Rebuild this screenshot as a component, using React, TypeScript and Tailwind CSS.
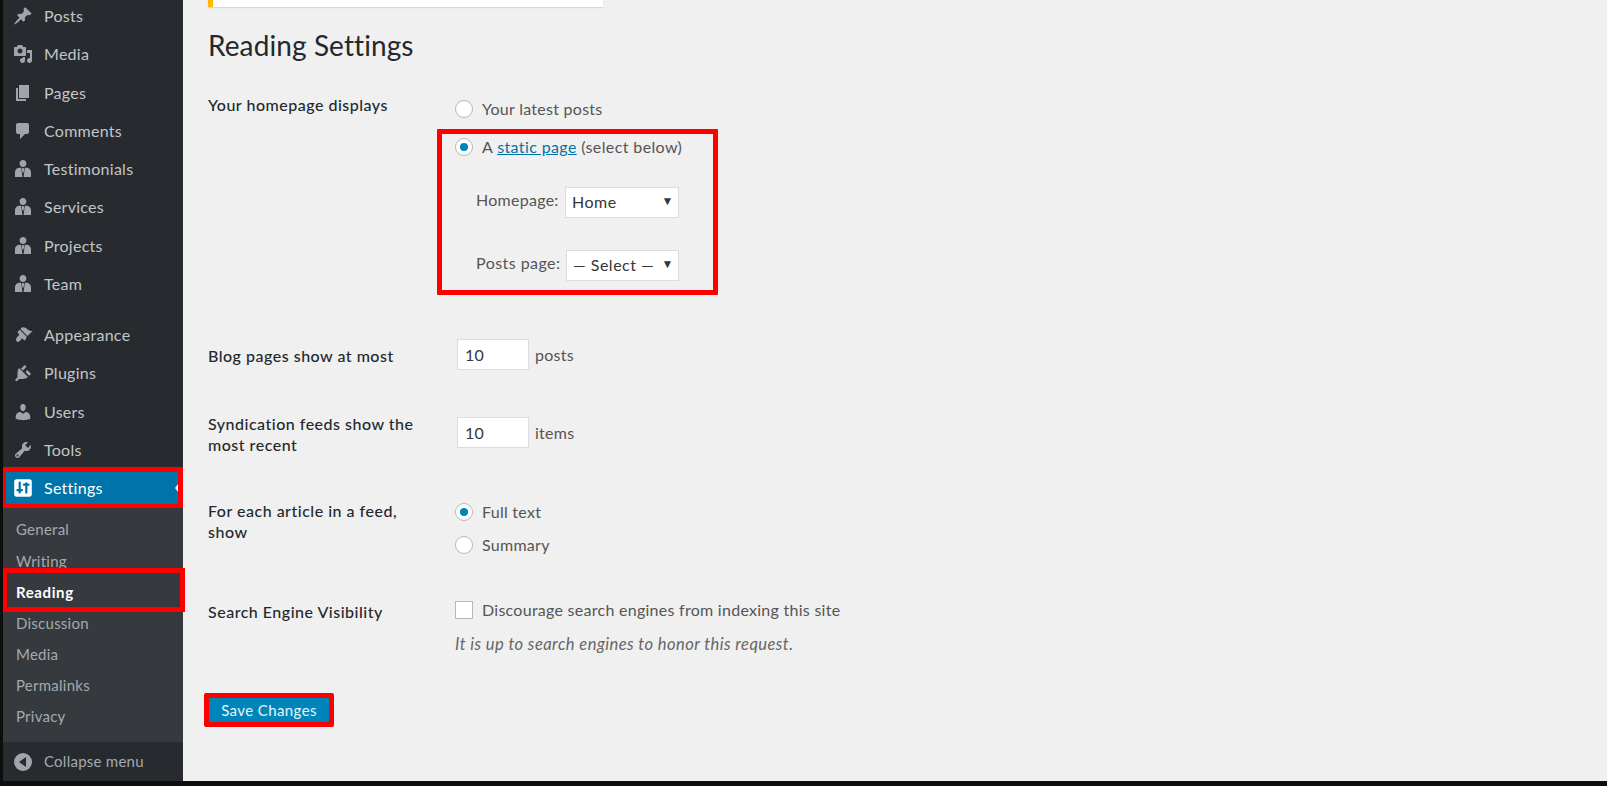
import React from 'react';

const font = 'font-["Lato","Noto_Sans",sans-serif]';

const MenuIcon = ({ name }: { name: string }) => {
  const cls = 'w-[20px] h-[20px] fill-[#a0a5aa]';
  switch (name) {
    case 'pin':
      return <svg viewBox="0 0 20 20" className={cls}><path d="M10.44 3.02l1.82-1.82 6.36 6.35-1.83 1.82c-1.05-.68-2.48-.57-3.41.36l-.75.75c-.92.93-1.04 2.35-.35 3.41l-1.83 1.82-2.41-2.41-2.8 2.79c-.42.42-3.38 2.71-3.8 2.29s1.86-3.39 2.28-3.81l2.79-2.79L4.1 9.36l1.83-1.82c1.05.69 2.48.57 3.4-.36l.75-.75c.93-.92 1.05-2.35.36-3.41z" /></svg>;
    case 'media':
      return <svg viewBox="0 0 20 20" className={cls}><path d="M13 11V4c0-.55-.45-1-1-1h-1.67L9 1H5L3.67 3H2c-.55 0-1 .45-1 1v7c0 .55.45 1 1 1h10c.55 0 1-.45 1-1zM7 4.500c1.380 0 2.500 1.120 2.500 2.500S8.380 9.500 7 9.500 4.500 8.380 4.500 7 5.620 4.500 7 4.500zM14 6h5v10.500c0 1.380-1.120 2.500-2.500 2.500S14 17.880 14 16.500s1.120-2.500 2.500-2.500c.17 0 .34.020.5.050V9h-3V6zm-4 8.050V13h2v3.500c0 1.380-1.120 2.500-2.500 2.500S7 17.880 7 16.500 8.120 14 9.500 14c.17 0 .34.020.5.050z" /></svg>;
    case 'pages':
      return <svg viewBox="0 0 20 20" className={cls}><path d="M6 15V2h10v13H6zm-1 1h8v2H3V5h2v11z" /></svg>;
    case 'comments':
      return <svg viewBox="0 0 20 20" className={cls}><path d="M5 2h9c1.100 0 2 .9 2 2v7c0 1.100-.9 2-2 2h-2l-5 5v-5H5c-1.100 0-2-.9-2-2V4c0-1.100.9-2 2-2z" /></svg>;
    case 'person':
      return <svg viewBox="0 0 20 20" className={cls}><path d="M10 1c1.900 0 3.400 1.500 3.400 3.500S11.900 8 10 8 6.600 6.500 6.600 4.500 8.100 1 10 1zM2 18v-5c0-2.200 2.200-4.300 4.500-4.300h1.700L9.400 18H2zm16 0h-7.400l1.200-9.300h1.700c2.300 0 4.500 2.100 4.500 4.300v5zM9.200 8.900h1.600l.3 2.400-1.100 3.400-1.100-3.400.3-2.400z" /></svg>;
    case 'appearance':
      return <svg viewBox="0 0 20 20" className={cls}><path d="M14.480 11.060L7.410 3.990l1.500-1.500c.5-.56 2.300-.47 3.510.32 1.210.8 1.430 1.280 2.910 2.100 1.180.64 2.450 1.260 4.450.85zm-.71.710L6.700 4.700 4.930 6.470c-.39.39-.39 1.020 0 1.410l1.060 1.060c.39.39.39 1.030 0 1.420-.6.600-1.420 1.280-2.120 2.120-1.400 1.730-1.270 3.050.35 4.240.8.600 1.400.250 2.120-.35 1.100-.9 1.500-1.700 2.120-2.470.4-.39 1.030-.39 1.420 0l1.060 1.060c.39.39 1.020.39 1.410 0z" /></svg>;
    case 'plugins':
      return <svg viewBox="0 0 20 20" className={cls}><path d="M13.110 4.360L9.870 7.600 8 5.730l3.240-3.240c.35-.34 1.050-.2 1.560.32.52.51.66 1.210.31 1.550zm-8 1.770l.91-1.120 9.010 9.010-1.190.84c-.71.710-2.630 1.160-3.820 1.160H6.140L4.310 17.850c-.46.46-1.230.46-1.690 0s-.46-1.230 0-1.690l1.840-1.840v-3.720c0-1.200.46-3.760 1-4.470zm12.400 4.210c.35.350.2 1.050-.32 1.560-.51.520-1.210.66-1.550.31l-3.240-3.240 1.870-1.870 3.240 3.240z" /></svg>;
    case 'users':
      return <svg viewBox="0 0 20 20" className={cls}><path d="M10 9.250c-2.270 0-2.730-3.440-2.730-3.440C7 4.020 7.820 2 9.970 2c2.160 0 2.980 2.020 2.710 3.810 0 0-.41 3.440-2.680 3.440zm0 2.570L12.720 10c2.390 0 4.520 2.330 4.520 4.530v2.490s-3.650 1.130-7.240 1.130c-3.650 0-7.240-1.130-7.240-1.130v-2.490c0-2.250 1.940-4.480 4.470-4.480z" /></svg>;
    case 'tools':
      return <svg viewBox="0 0 20 20" className={cls}><path d="M16.680 9.770c-1.340 1.340-3.300 1.670-4.950.99l-5.410 6.520c-.99.990-2.590.990-3.580 0s-.99-2.590 0-3.570l6.520-5.420c-.68-1.650-.35-3.610.99-4.950 1.280-1.280 3.120-1.620 4.720-1.060l-2.890 2.890 2.820 2.820 2.860-2.870c.53 1.580.18 3.390-1.080 4.650zM3.810 16.210c.4.390 1.030.39 1.420 0 .4-.4.400-1.030 0-1.430-.39-.39-1.020-.39-1.420 0-.39.4-.39 1.030 0 1.430z" /></svg>;
    case 'settings':
      return <svg viewBox="0 0 20 20" className="w-[22px] h-[22px] -ml-[1px] fill-white"><path fillRule="evenodd" d="M18 16V4c0-1.100-.9-2-2-2H4c-1.100 0-2 .9-2 2v12c0 1.100.9 2 2 2h12c1.100 0 2-.9 2-2zM8 11h1c.55 0 1 .45 1 1s-.45 1-1 1H8v1c0 .55-.45 1-1 1s-1-.45-1-1v-1H5c-.55 0-1-.45-1-1s.45-1 1-1h1V5c0-.55.45-1 1-1s1 .45 1 1v6zm7-3h-1v7h-2V8h-1c-.55 0-1-.45-1-1s.45-1 1-1h1V5h2v1h1c.55 0 1 .45 1 1s-.45 1-1 1z" /></svg>;
    default:
      return null;
  }
};

const topItems = [
  { label: 'Posts', icon: 'pin' },
  { label: 'Media', icon: 'media' },
  { label: 'Pages', icon: 'pages' },
  { label: 'Comments', icon: 'comments' },
  { label: 'Testimonials', icon: 'person' },
  { label: 'Services', icon: 'person' },
  { label: 'Projects', icon: 'person' },
  { label: 'Team', icon: 'person' },
];
const midItems = [
  { label: 'Appearance', icon: 'appearance' },
  { label: 'Plugins', icon: 'plugins' },
  { label: 'Users', icon: 'users' },
  { label: 'Tools', icon: 'tools' },
];
const subItems = ['General', 'Writing', 'Reading', 'Discussion', 'Media', 'Permalinks', 'Privacy'];

const MenuRow = ({ label, icon }: { label: string; icon: string }) => (
  <div className="flex items-center h-[38.25px] pl-[10px] text-[16px] tracking-[0.27px] text-[#c3c5c7]">
    <span className="w-[31px] shrink-0"><MenuIcon name={icon} /></span>
    <span>{label}</span>
  </div>
);

const Radio = ({ checked }: { checked?: boolean }) => (
  <span className="w-[18px] h-[18px] rounded-full bg-white border border-[#b4b9be] flex items-center justify-center shrink-0">
    {checked && <span className="w-[8px] h-[8px] rounded-full bg-[#0085ba]" />}
  </span>
);

const FakeSelect = ({ value, width, height }: { value: string; width: string; height: string }) => (
  <div className={`${width} ${height} bg-white border border-[#dddddd] flex items-center justify-between pl-[6px] pr-[4px] tracking-[0.5px] text-[#32373c]`}>
    <span className="whitespace-nowrap -mt-[1px]">{value}</span>
    <span className="text-[12px] leading-none text-[#32373c] -mt-[4px]">▼</span>
  </div>
);

const NumberBox = ({ value }: { value: string }) => (
  <div className="w-[72px] h-[31px] bg-white border border-[#dddddd] flex items-center pl-[7px] text-[#32373c]">{value}</div>
);

const labelCls = 'font-medium text-[#23282d] tracking-[0.5px]';

export default function App() {
  return (
    <div className={`${font} w-[1607px] h-[786px] overflow-hidden bg-[#0d0d0d] pb-[5px] pl-[3px] flex`}>
      {/* Admin menu */}
      <aside className="w-[180px] shrink-0 bg-[#272b30] flex flex-col -mt-[3px]">
        <div className="flex flex-col">
          {topItems.map(i => <MenuRow key={i.label} {...i} />)}
        </div>
        <div className="flex flex-col mt-[13px]">
          {midItems.map(i => <MenuRow key={i.label} {...i} />)}
        </div>
        <div className="relative flex items-center h-[38px] pl-[10px] text-[16px] tracking-[0.27px] text-white bg-[#0073aa]">
          <span className="w-[31px] shrink-0"><MenuIcon name="settings" /></span>
          <span>Settings</span>
          <span className="absolute right-[5px] top-[15px] w-0 h-0 border-y-[4px] border-y-transparent border-r-[3px] border-r-[#f1f1f1]" />
          <span className="absolute left-0 -top-[2px] w-[180px] h-[41px] border-[5px] border-l-[3px] border-b-[4px] border-[#ff0000]" />
        </div>
        <div className="flex-1 bg-[#363a3f] pt-[7px] text-[15px] tracking-[0.25px] text-[#a5a9ad]">
          {subItems.map(s => (
            <div key={s} className={`relative h-[31.2px] flex items-center pl-[13px] ${s === 'Reading' ? 'text-white font-bold tracking-[0.6px]' : ''}`}>
              {s}
              {s === 'Reading' && <span className="absolute left-0 -top-[8px] w-[182px] h-[44px] border-[5px] border-l-[4px] border-[#ff0000] z-10" />}
            </div>
          ))}
        </div>
        <div className="h-[39px] shrink-0 bg-[#272b30] flex items-center pl-[11px] text-[15px] tracking-[0.25px] text-[#a5a9ad]">
          <span className="w-[18px] h-[18px] rounded-full bg-[#a0a5aa] flex items-center justify-center mr-[12px]">
            <span className="w-0 h-0 border-y-[5px] border-y-transparent border-r-[7px] border-r-[#272b30] -ml-[2px]" />
          </span>
          Collapse menu
        </div>
      </aside>

      {/* Content */}
      <main className="flex-1 bg-[#f0f0f0] pl-[25px] text-[16px] tracking-[0.27px] text-[#555555]">
        <div className="w-[395px] h-[7px] bg-white border-l-[5px] border-[#ffb900] shadow-[0_1px_1px_rgba(0,0,0,0.1)]" />
        <h1 className="text-[28px] tracking-[0.1px] leading-[30px] text-[#23282d] mt-[23px]">Reading Settings</h1>

        <div className="flex mt-[37px]">
          <div className={`w-[247px] leading-[20px] -mt-[2px] ${labelCls}`}>Your homepage displays</div>
          <div className="relative mt-[2px]">
            <label className="flex items-center gap-[9px] h-[20px]"><Radio /> Your latest posts</label>
            <label className="flex items-center gap-[9px] h-[20px] mt-[18px]">
              <Radio checked />
              <span className="tracking-[0.38px]">A <span className="text-[#0073aa] underline">static page</span> (select below)</span>
            </label>
            <div className="flex items-center mt-[30px] ml-[21px]">
              <span className="w-[89px] -mt-[5px]">Homepage:</span>
              <FakeSelect value="Home" width="w-[114px]" height="h-[31px]" />
            </div>
            <div className="flex items-center mt-[32px] ml-[21px]">
              <span className="w-[90px] -mt-[5px] tracking-[0.45px]">Posts page:</span>
              <FakeSelect value="— Select —" width="w-[113px]" height="h-[31px]" />
            </div>
            <span className="absolute -left-[18px] top-[30px] w-[281px] h-[166px] border-[5px] border-[#ff0000] rounded-[1px]" />
          </div>
        </div>

        <div className="flex mt-[58px] items-center">
          <div className={`w-[249px] pt-[2px] ${labelCls}`}>Blog pages show at most</div>
          <NumberBox value="10" />
          <span className="ml-[6px]">posts</span>
        </div>

        <div className="flex items-start mt-[47px]">
          <div className={`w-[249px] leading-[21px] -mt-[4px] ${labelCls}`}>Syndication feeds show the<br />most recent</div>
          <div className="flex items-center h-[31px]">
            <NumberBox value="10" />
            <span className="ml-[6px] pt-[1px]">items</span>
          </div>
        </div>

        <div className="flex mt-[44px]">
          <div className={`w-[247px] leading-[21px] pt-[1px] ${labelCls}`}>For each article in a feed,<br />show</div>
          <div className="mt-[3px]">
            <label className="flex items-center gap-[9px] h-[20px]"><Radio checked /> Full text</label>
            <label className="flex items-center gap-[9px] h-[20px] mt-[13px]"><Radio /> Summary</label>
          </div>
        </div>

        <div className="flex mt-[45px]">
          <div className={`w-[247px] ${labelCls}`}>Search Engine Visibility</div>
          <div>
            <label className="flex items-center gap-[9px] h-[20px]">
              <span className="w-[18px] h-[18px] bg-white border border-[#b4b9be] shrink-0" />
              Discourage search engines from indexing this site
            </label>
            <p className="italic text-[#666666] mt-[13px] text-[16.5px] tracking-[0.45px] leading-[22px]">It is up to search engines to honor this request.</p>
          </div>
        </div>

        <div className="relative w-fit mt-[43px] ml-[1px]">
          <button className="h-[24px] w-[120px] bg-[#0085ba] text-[#e8f4f8] text-[15px] tracking-[0.4px] flex items-center justify-center">Save Changes</button>
          <span className="absolute -left-[5px] -top-[5px] w-[130px] h-[34px] border-[5px] border-[#ff0000] rounded-[2px]" />
        </div>
      </main>
    </div>
  );
}
